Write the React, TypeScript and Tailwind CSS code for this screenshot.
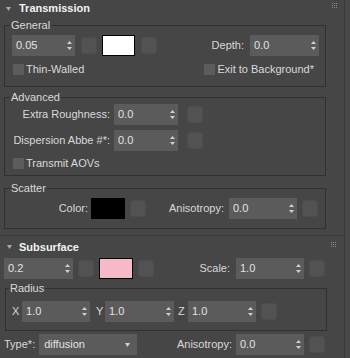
import React from 'react';

function Arrows() {
  return (
    <svg width="5" height="9" viewBox="0 0 5 9" className="shrink-0">
      <path d="M2.5 0L5 3H0z" fill="#d0d0d0" />
      <path d="M0 6h5L2.5 9z" fill="#d0d0d0" />
    </svg>
  );
}

function Spinner({ value, w }: { value: string; w: string }) {
  return (
    <div className={`${w} h-[21px] shrink-0 bg-[#5b5b5b] flex items-center justify-between pl-[4px] pr-[3px] text-[#e2e2e2]`}>
      <span>{value}</span>
      <Arrows />
    </div>
  );
}

function Square() {
  return <div className="w-[16px] h-[17px] shrink-0 rounded-[3px] bg-[#525252] border border-[#4d4d4d]" />;
}

function Check({ label }: { label: string }) {
  return (
    <div className="flex items-center h-[11px]">
      <div className="w-[11px] h-[11px] bg-[#5c5c5c]" />
      <span className="ml-[2px]">{label}</span>
    </div>
  );
}

function Grip() {
  return (
    <svg width="6" height="6" viewBox="0 0 6 6" className="shrink-0">
      {[0, 2, 4].map((y) =>
        [0, 2, 4].map((x) => <rect key={`${x}-${y}`} x={x} y={y} width="1" height="1" fill="#8a8a8a" />)
      )}
    </svg>
  );
}

function Triangle() {
  return (
    <svg width="5" height="4" viewBox="0 0 5 4" className="shrink-0">
      <path d="M0 0h5L2.5 4z" fill="#a8a8a8" />
    </svg>
  );
}

export default function App() {
  return (
    <div
      className="w-[350px] h-[358px] overflow-hidden bg-[#464646] flex text-[11px] leading-[13px] text-[#d9d9d9]"
      style={{ fontFamily: '"Liberation Sans", Arial, sans-serif' }}
    >
      <div className="w-[344px] shrink-0 flex flex-col">
        {/* Transmission */}
        <div className="flex flex-col pb-[6px]">
          <div className="h-[17px] flex items-center pl-[6px] pr-[6px]">
            <Triangle />
            <span className="ml-[8px] font-bold text-[#f2f2f2]">Transmission</span>
            <div className="ml-auto self-start mt-[3px]">
              <Grip />
            </div>
          </div>

          <fieldset className="ml-[4px] w-[322px] mt-[2px] border border-[#303030] pb-[11px]">
            <legend className="ml-[5px] px-[1px]">General</legend>
            <div className="flex items-center h-[21px] mt-[3px] pl-[7px] pr-[6px]">
              <Spinner value="0.05" w="w-[63px]" />
              <div className="ml-[6px]"><Square /></div>
              <div className="ml-[5px] w-[33px] h-[21px] bg-white border border-black" />
              <div className="ml-[6px]"><Square /></div>
              <span className="ml-auto">Depth:</span>
              <div className="ml-[6px]"><Spinner value="0.0" w="w-[69px]" /></div>
            </div>
            <div className="flex items-center justify-between mt-[8px] pl-[8px] pr-[11px]">
              <Check label="Thin-Walled" />
              <Check label="Exit to Background*" />
            </div>
          </fieldset>

          <fieldset className="ml-[4px] w-[322px] mt-[4px] border border-[#303030] pb-[6px]">
            <legend className="ml-[5px] px-[1px]">Advanced</legend>
            <div className="flex items-center h-[21px]">
              <span className="w-[105px] text-right">Extra Roughness:</span>
              <div className="ml-[4px]"><Spinner value="0.0" w="w-[64px]" /></div>
              <div className="ml-[9px]"><Square /></div>
            </div>
            <div className="flex items-center h-[21px] mt-[5px]">
              <span className="w-[105px] text-right">Dispersion Abbe #*:</span>
              <div className="ml-[4px]"><Spinner value="0.0" w="w-[64px]" /></div>
              <div className="ml-[9px]"><Square /></div>
            </div>
            <div className="mt-[7px] pl-[8px]">
              <Check label="Transmit AOVs" />
            </div>
          </fieldset>

          <fieldset className="ml-[4px] w-[322px] mt-[6px] border border-[#303030] pb-[9px]">
            <legend className="ml-[5px] px-[1px]">Scatter</legend>
            <div className="flex items-center h-[21px] mt-[3px] pr-[7px]">
              <span className="w-[83px] text-right">Color:</span>
              <div className="ml-[3px] w-[34px] h-[21px] bg-black" />
              <div className="ml-[5px]"><Square /></div>
              <span className="ml-auto">Anisotropy:</span>
              <div className="ml-[5px]"><Spinner value="0.0" w="w-[68px]" /></div>
              <div className="ml-[5px]"><Square /></div>
            </div>
          </fieldset>
        </div>

        {/* Subsurface */}
        <div className="flex flex-col border-t border-[#3a3a3a]">
          <div className="h-[22px] flex items-center pl-[7px] pr-[7px]">
            <Triangle />
            <span className="ml-[7px] font-bold text-[#f2f2f2]">Subsurface</span>
            <div className="ml-auto self-start mt-[6px]">
              <Grip />
            </div>
          </div>

          <div className="flex items-center h-[21px] pl-[4px] pr-[19px]">
            <Spinner value="0.2" w="w-[69px]" />
            <div className="ml-[5px]"><Square /></div>
            <div className="ml-[5px] w-[34px] h-[21px] bg-[#f7b8c8] border border-black" />
            <div className="ml-[5px]"><Square /></div>
            <span className="ml-auto">Scale:</span>
            <div className="ml-[6px]"><Spinner value="1.0" w="w-[68px]" /></div>
            <div className="ml-[5px]"><Square /></div>
          </div>

          <fieldset className="ml-[5px] w-[322px] mt-[3px] border border-[#303030] pb-[8px]">
            <legend className="ml-[3px] px-[1px]">Radius</legend>
            <div className="flex items-center h-[21px] mt-[6px] pl-[6px]">
              <span className="w-[10px]">X</span>
              <Spinner value="1.0" w="w-[68px]" />
              <span className="ml-[6px] w-[9px]">Y</span>
              <Spinner value="1.0" w="w-[69px]" />
              <span className="ml-[4px] w-[10px]">Z</span>
              <Spinner value="1.0" w="w-[68px]" />
              <div className="ml-[5px]"><Square /></div>
            </div>
          </fieldset>

          <div className="flex items-center h-[21px] mt-[3px] pl-[4px] pr-[19px]">
            <span>Type*:</span>
            <div className="ml-[4px] w-[98px] h-[21px] bg-[#5b5b5b] flex items-center justify-between pl-[5px] pr-[7px] text-[#e2e2e2]">
              <span>diffusion</span>
              <svg width="5" height="4" viewBox="0 0 5 4">
                <path d="M0 0h5L2.5 4z" fill="#d0d0d0" />
              </svg>
            </div>
            <span className="ml-auto">Anisotropy:</span>
            <div className="ml-[4px]"><Spinner value="0.0" w="w-[68px]" /></div>
            <div className="ml-[5px]"><Square /></div>
          </div>
        </div>
      </div>
      <div className="flex-1 border-l border-[#3a3a3a] bg-[#484848]" />
    </div>
  );
}
